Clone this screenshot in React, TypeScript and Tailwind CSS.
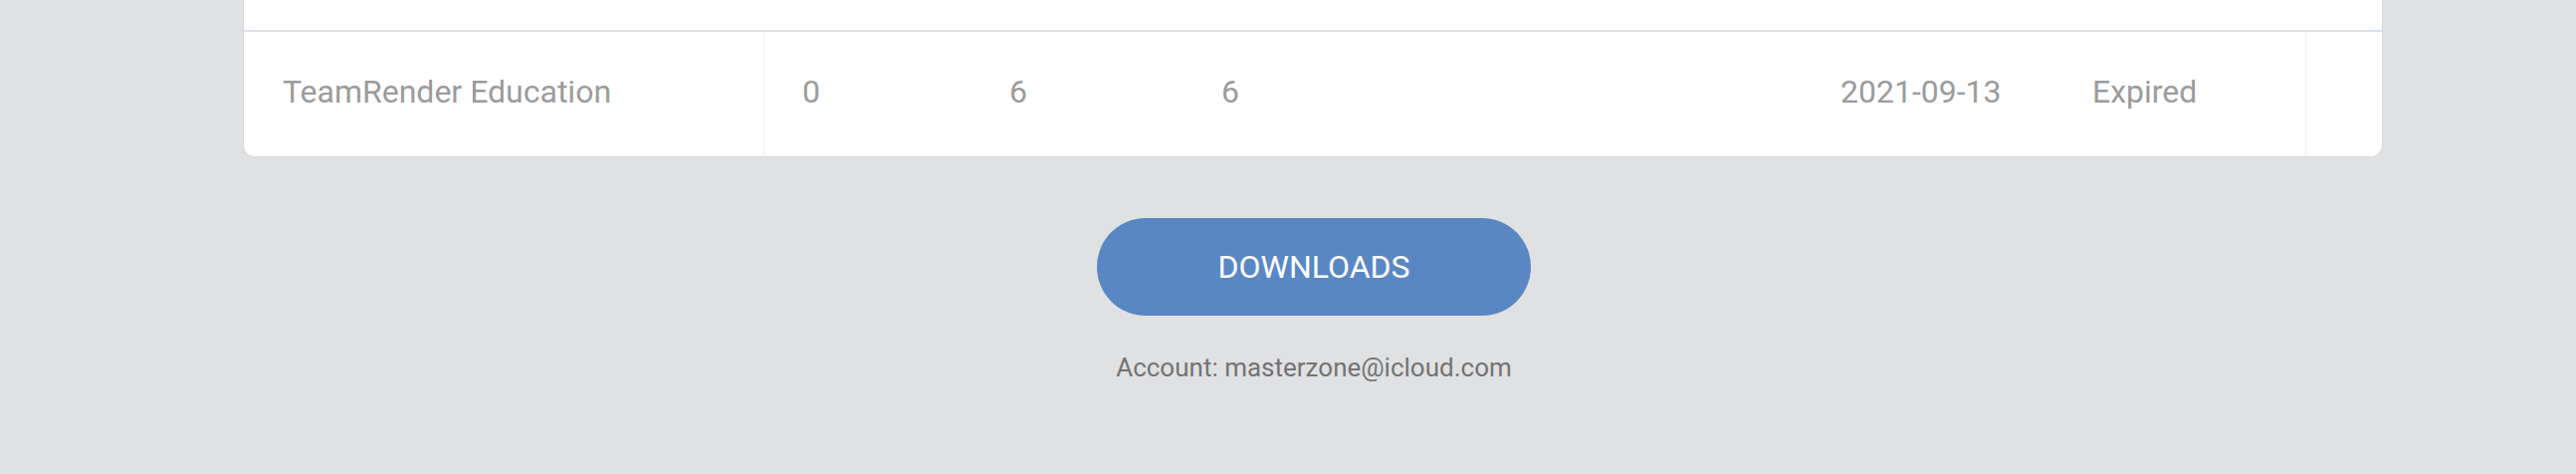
type Row = {
    name: string,
    cells: { value: string, width: string }[],
};

const row: Row = {
    name: "TeamRender Education",
    cells: [
        { value: "0", width: "w-[208px]" },
        { value: "6", width: "w-[213px]" },
        { value: "6", width: "w-[622px]" },
        { value: "2021-09-13", width: "w-[253px]" },
        { value: "Expired", width: "w-[252px]" },
    ],
};

const LicenseRow = ({ name, cells }: Row) => {
    return (
        <div className="flex h-[125px] items-stretch">
            <div className="flex w-[522px] items-center pl-[39px] pb-[5px]">{name}</div>
            <div className="flex border-l border-[#f1f1f1]">
                {cells.map((cell, i) => (
                    <div key={i} className={`flex items-center pl-[38px] pb-[5px] ${cell.width}`}>
                        {cell.value}
                    </div>
                ))}
            </div>
            <div className="flex-1 border-l border-[#f1f1f1]" />
        </div>
    );
};

export default function App() {
    return (
        <div className="h-[476px] w-[2588px] bg-[#e0e1e3] font-['Roboto','Liberation_Sans',sans-serif]">
            <div className="ml-[244px] w-[2150px]">
                <div className="overflow-hidden rounded-b-[12px] border-x border-b border-[#d6d9dc] bg-white text-[32px] text-[#9b9b9b]">
                    <div className="h-[30px]" />
                    <div className="h-[2px] bg-[#dde2e7]" />
                    <LicenseRow {...row} />
                </div>
                <div className="flex flex-col items-center pt-[61px] pl-[2px]">
                    <button className="h-[98px] w-[436px] rounded-full bg-[#5987c3] text-[32px] text-white">
                        DOWNLOADS
                    </button>
                    <p className="mt-[33px] text-[26px] text-[#737373]">Account: masterzone@icloud.com</p>
                </div>
            </div>
        </div>
    );
}
